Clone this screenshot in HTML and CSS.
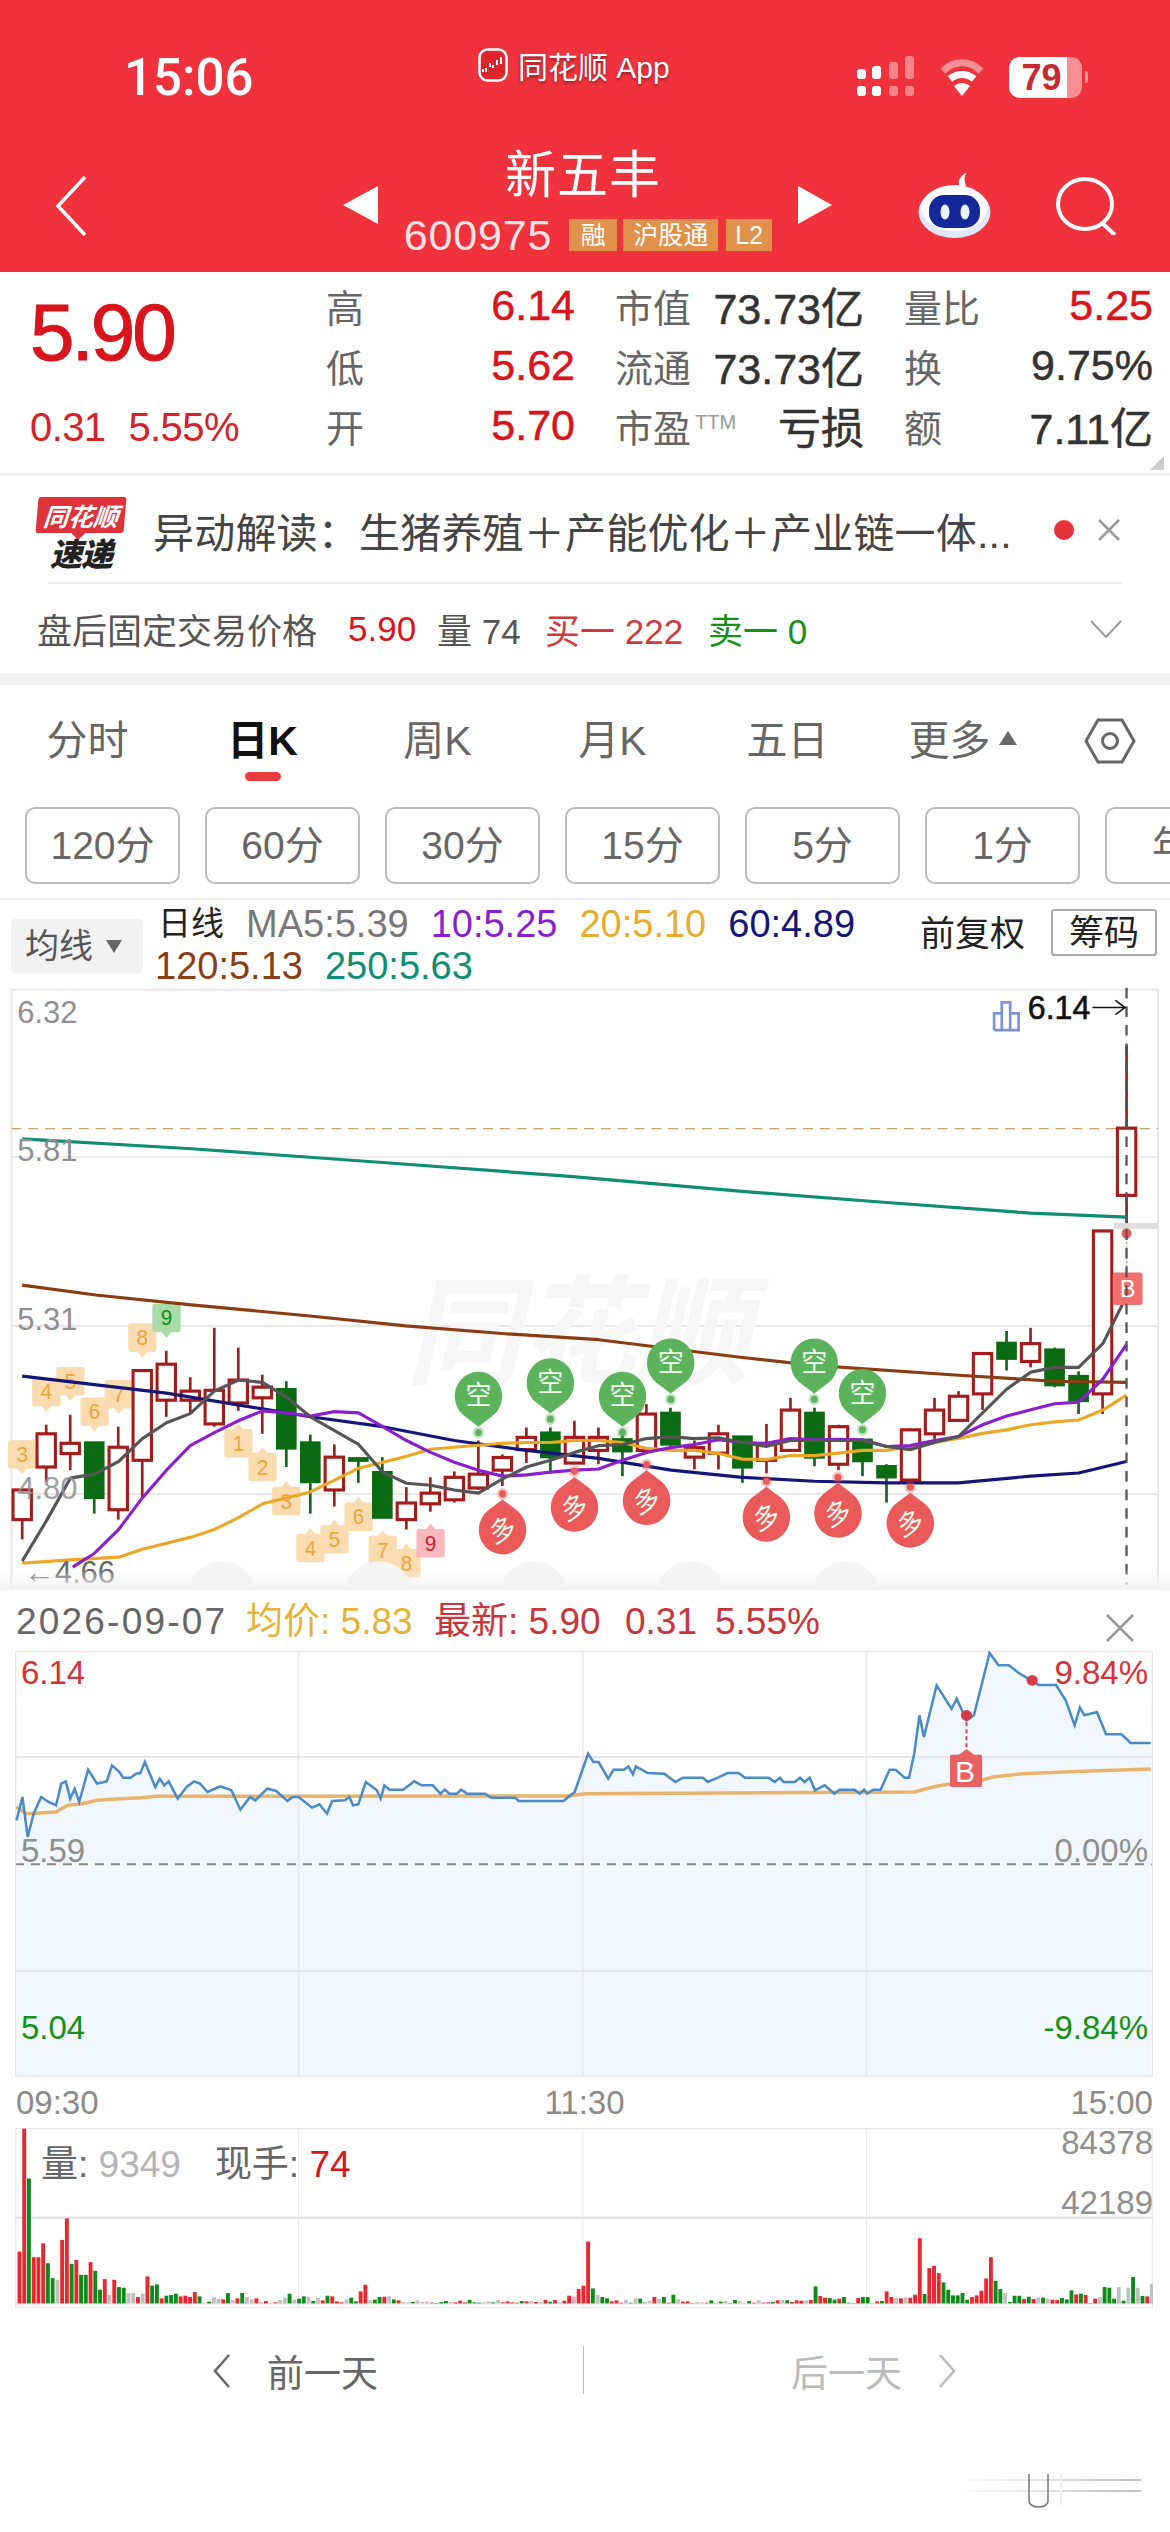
FILE: index.html

```html
<!DOCTYPE html>
<html lang="zh-CN">
<head>
  <meta charset="UTF-8">
  <title>新五丰 600975</title>
  <link rel="stylesheet" href="styles.css">
</head>
<body>
<div class="page">

  <header class="head">
    <div class="status">
      <div class="time">15:06</div>
      <div class="app">
        <svg class="app-icon" viewBox="0 0 30 34">
          <rect x="1.5" y="1.5" width="27" height="31" rx="8" fill="#e0242c" stroke="#fff" stroke-width="2.5"/>
          <path d="M5 21v3M8 20v4M12 15v4M15 17v3M19 12v5M23 9v7" stroke="#fff" stroke-width="2"/>
        </svg>
        <span>同花顺 App</span>
      </div>
      <div class="status-icons">
        <svg class="signal" viewBox="0 0 58 42">
          <g fill="#fff">
            <rect x="0" y="13" width="9" height="10" rx="3"/><rect x="0" y="30" width="9" height="10" rx="3"/>
            <rect x="15" y="10" width="9" height="13" rx="3"/><rect x="15" y="30" width="9" height="10" rx="3"/>
          </g>
          <g fill="#fff" opacity=".4">
            <rect x="32" y="6" width="9" height="17" rx="3"/><rect x="32" y="30" width="9" height="10" rx="3"/>
            <rect x="48" y="0" width="9" height="23" rx="3"/><rect x="48" y="30" width="9" height="10" rx="3"/>
          </g>
        </svg>
        <svg class="wifi" viewBox="0 0 46 38">
          <path d="M4 13C15 2 31 2 42 13" fill="none" stroke="#fff" stroke-width="7" opacity=".45"/>
          <path d="M11 21c7-6 17-6 24 0" fill="none" stroke="#fff" stroke-width="7"/>
          <path d="M15 28c5-4 11-4 16 0l-8 10z" fill="#fff"/>
        </svg>
        <div class="battery">79</div>
        <div class="battery-tip"></div>
      </div>
    </div>
    <div class="nav">
      <svg class="back" viewBox="0 0 32 60"><path d="M30 1 3 30l27 29" fill="none" stroke="#fff" stroke-width="3.5"/></svg>
      <div class="tri tri-left"></div>
      <div class="stock">
        <div class="stock-name">新五丰</div>
        <div class="stock-code">
          <span>600975</span>
          <b class="tag tag-1">融</b>
          <b class="tag tag-2">沪股通</b>
          <b class="tag tag-3">L2</b>
        </div>
      </div>
      <div class="tri tri-right"></div>
      <svg class="robot" viewBox="0 0 73 66">
        <path d="M42 15c-3-6 0-11 6-14-2 4-2 8 0 13z" fill="#fff"/>
        <ellipse cx="36.500" cy="40" rx="36" ry="26" fill="#dfe8f8"/>
        <ellipse cx="36.500" cy="36" rx="33" ry="23" fill="#fff"/>
        <rect x="11" y="23" width="51" height="33" rx="15" fill="#14289a"/>
        <ellipse cx="27" cy="40" rx="4.500" ry="7.500" fill="#e8f3ff"/>
        <ellipse cx="47" cy="40" rx="4.500" ry="7.500" fill="#e8f3ff"/>
      </svg>
      <svg class="search" viewBox="0 0 60 58">
        <ellipse cx="29" cy="27" rx="27" ry="25" fill="none" stroke="#fff" stroke-width="4"/>
        <path d="M46 46l13 12" stroke="#fff" stroke-width="4"/>
      </svg>
    </div>
  </header>

  <section class="quote">
    <div class="price-box">
      <div class="price">5.90</div>
      <div class="change"><span>0.31</span><span>5.55%</span></div>
    </div>
    <div class="stats">
      <div class="stat"><span>高</span><b class="up">6.14</b></div>
      <div class="stat"><span>市值</span><b>73.73亿</b></div>
      <div class="stat"><span>量比</span><b class="up">5.25</b></div>
      <div class="stat"><span>低</span><b class="up">5.62</b></div>
      <div class="stat"><span>流通</span><b>73.73亿</b></div>
      <div class="stat"><span>换</span><b>9.75%</b></div>
      <div class="stat"><span>开</span><b class="up">5.70</b></div>
      <div class="stat"><span>市盈<sup>TTM</sup></span><b>亏损</b></div>
      <div class="stat"><span>额</span><b>7.11亿</b></div>
    </div>
    <div class="corner"></div>
  </section>

  <section class="alert">
    <div class="logo">
      <div class="logo-top">同花顺</div>
      <div class="logo-bottom">速递</div>
    </div>
    <div class="alert-text">异动解读：生猪养殖＋产能优化＋产业链一体...</div>
    <div class="alert-dot"></div>
    <svg class="alert-close" viewBox="0 0 24 24"><path d="M2 2l20 20M22 2 2 22" stroke="#999" stroke-width="2.500"/></svg>
  </section>

  <section class="after">
    <span class="after-title">盘后固定交易价格</span>
    <span class="after-price">5.90</span>
    <span class="after-vol">量 74</span>
    <span class="after-buy">买一 222</span>
    <span class="after-sell">卖一 0</span>
    <svg class="after-more" viewBox="0 0 32 18"><path d="M1 1l15 16L31 1" fill="none" stroke="#999" stroke-width="2"/></svg>
  </section>

  <nav class="tabs">
    <div class="tab">分时</div>
    <div class="tab tab-on">日K</div>
    <div class="tab">周K</div>
    <div class="tab">月K</div>
    <div class="tab">五日</div>
    <div class="tab">更多<i class="more-arrow"></i></div>
    <svg class="hex" viewBox="0 0 52 46">
      <path d="M14 2h24l12 21-12 21H14L2 23z" fill="none" stroke="#666" stroke-width="3"/>
      <circle cx="26" cy="23" r="7.500" fill="none" stroke="#666" stroke-width="3"/>
    </svg>
  </nav>

  <div class="periods">
    <div class="period">120分</div>
    <div class="period">60分</div>
    <div class="period">30分</div>
    <div class="period">15分</div>
    <div class="period">5分</div>
    <div class="period">1分</div>
    <div class="period period-year">年</div>
  </div>

  <section class="legend">
    <div class="ma-select">均线<i></i></div>
    <div class="ma-values">
      <div class="ma-row">
        <span class="ma-name">日线</span>
        <span class="ma5">MA5:5.39</span>
        <span class="ma10">10:5.25</span>
        <span class="ma20">20:5.10</span>
        <span class="ma60">60:4.89</span>
      </div>
      <div class="ma-row">
        <span class="ma120">120:5.13</span>
        <span class="ma250">250:5.63</span>
      </div>
    </div>
    <div class="adjust">前复权</div>
    <div class="chips">筹码</div>
  </section>

  <div class="kchart"><svg id="kline" viewBox="0 13 3057 1530" preserveAspectRatio="none"></svg></div>

  <section class="day">
    <div class="day-head">
      <span class="day-date">2026-09-07</span>
      <span class="day-avg">均价: 5.83</span>
      <span class="day-last">最新: 5.90</span>
      <span class="day-chg">0.31</span>
      <span class="day-pct">5.55%</span>
      <svg class="day-close" viewBox="0 0 28 28"><path d="M1 1l26 26M27 1 1 27" stroke="#999" stroke-width="2.500"/></svg>
    </div>
    <div class="day-chart">
      <svg id="minute" viewBox="20 212 1525 1278" preserveAspectRatio="none"></svg>
      <span class="axis up tl">6.14</span>
      <span class="axis up tr">9.84%</span>
      <span class="axis gray ml">5.59</span>
      <span class="axis gray mr">0.00%</span>
      <span class="axis down bl">5.04</span>
      <span class="axis down br">-9.84%</span>
      <span class="flag-b">B</span>
    </div>
    <div class="day-times"><span>09:30</span><span>11:30</span><span>15:00</span></div>
    <div class="vol-chart">
      <svg id="volume" viewBox="20 203 1525 542" preserveAspectRatio="none"></svg>
      <div class="vol-info">
        <span>量: <em class="muted">9349</em></span>
        <span>现手: <em class="up">74</em></span>
      </div>
      <span class="vol-max">84378</span>
      <span class="vol-mid">42189</span>
    </div>
    <div class="day-nav">
      <div class="day-btn">
        <svg viewBox="0 0 18 34"><path d="M16 1 2 17l14 16" fill="none" stroke="#666" stroke-width="2.500"/></svg>
        <span>前一天</span>
      </div>
      <div class="day-btn day-btn-off">
        <span>后一天</span>
        <svg viewBox="0 0 18 34"><path d="M2 1l14 16L2 33" fill="none" stroke="#bbb" stroke-width="2.500"/></svg>
      </div>
    </div>
  </section>

  <svg class="mark" viewBox="0 0 186 36">
    <defs>
      <linearGradient id="markFade"><stop offset="0" stop-color="#000" stop-opacity="0"/><stop offset="1" stop-color="#000" stop-opacity=".25"/></linearGradient>
    </defs>
    <rect x="0" y="6" width="186" height="2" fill="url(#markFade)"/>
    <rect x="0" y="17" width="186" height="2" fill="url(#markFade)"/>
    <path d="M74 1v27c0 8 19 8 19 0V1" fill="none" stroke="#777" stroke-width="1.500"/>
    <path d="M106 0v32" stroke="#eee" stroke-width="2"/>
  </svg>
</div>
<script src="chart.js"></script>
</body>
</html>
```

FILE: styles.css

```css
* { box-sizing: border-box; }
html, body { margin: 0; padding: 0; background: #fff; }
body { font-family: "Liberation Sans", "Noto Sans CJK SC", sans-serif; color: #333; }
svg { display: block; }
.page { width: 1170px; height: 2532px; overflow: hidden; position: relative; }
.up { color: #d8141c; }
.down { color: #169016; }
.gray { color: #8f8f8f; }

/* red header */
.head { background: #f0323c; height: 272px; color: #fff; }
.status { height: 154px; display: grid; grid-template-columns: 478px 379px auto; align-items: center; }
.time { padding-left: 124px; font: 500 51px Roboto, sans-serif; }
.app { display: flex; align-items: center; gap: 10px; margin-bottom: 24px; font-size: 30px; text-shadow: 0 2px 3px rgba(0, 0, 0, .4); }
.app-icon { width: 30px; height: 34px; }
.status-icons { display: flex; align-items: center; }
.signal { width: 58px; height: 42px; }
.wifi { width: 46px; height: 38px; margin-left: 24px; }
.battery { width: 73px; height: 41px; margin-left: 24px; border-radius: 11px; background: linear-gradient(90deg, #fff 79%, rgba(255, 255, 255, .45) 79%); color: #c82a34; font: 700 36px/41px "Liberation Sans", sans-serif; text-align: center; padding-right: 8px; }
.battery-tip { width: 3px; height: 12px; margin-left: 3px; background: rgba(255, 255, 255, .5); border-radius: 0 3px 3px 0; }

.nav { height: 118px; display: flex; align-items: flex-start; }
.back { width: 32px; height: 60px; margin: 22px 0 0 55px; }
.tri { width: 0; height: 0; margin-top: 32px; border-top: 19px solid transparent; border-bottom: 19px solid transparent; }
.tri-left { margin-left: 256px; border-right: 35px solid #fff; }
.tri-right { border-left: 34px solid #fff; }
.stock { width: 420px; text-align: center; }
.stock-name { font-size: 51px; line-height: 56px; margin: -6px 0 0 -10px; letter-spacing: 1px; }
.stock-code { display: flex; justify-content: center; align-items: center; gap: 6px; margin-top: 15px; height: 32px; font-size: 43px; color: #fbe3e3; }
.stock-code span { margin-right: 11px; letter-spacing: .8px; }
.tag { height: 32px; line-height: 32px; font-size: 25px; font-weight: 400; background: #e0914a; color: #fff; text-align: center; }
.tag-1 { width: 48px; }
.tag-2 { width: 95px; }
.tag-3 { width: 46px; margin-left: 2px; }
.robot { width: 73px; height: 66px; margin: 18px 0 0 86px; }
.search { width: 60px; height: 58px; margin: 23px 0 0 65px; }

/* quote table */
.quote { height: 204px; display: flex; position: relative; border-bottom: 3px solid #eee; }
.price-box { width: 326px; padding-left: 30px; }
.price { font-size: 80px; line-height: 80px; margin-top: 21px; color: #d8141c; letter-spacing: -3px; -webkit-text-stroke: 1px #d8141c; }
.change { display: flex; gap: 23px; margin-top: 32px; font-size: 40px; line-height: 44px; color: #d2232b; letter-spacing: -.6px; }
.stats { width: 827px; padding-top: 3px; display: grid; grid-template-columns: repeat(3, 249px); column-gap: 40px; grid-auto-rows: 60px; align-items: center; }
.stat { display: flex; justify-content: space-between; align-items: center; }
.stat span { font-size: 38px; color: #666; white-space: nowrap; }
.stat b { font-size: 43px; font-weight: 400; color: #333; -webkit-text-stroke: .5px currentColor; white-space: nowrap; }
.stat b.up { color: #d8141c; }
.stat sup { font-size: 20px; color: #999; margin-left: 4px; vertical-align: 13px; line-height: 0; }
.corner { position: absolute; right: 6px; bottom: 3px; width: 0; height: 0; border-left: 14px solid transparent; border-bottom: 14px solid #ccc; }

/* alert */
.alert { height: 108px; margin: 0 48px 0 37px; display: flex; align-items: center; position: relative; }
.alert::after { content: ""; position: absolute; left: 11px; right: 0; bottom: 0; height: 2px; background: #eee; }
.logo { width: 88px; margin-top: 6px; }
.logo-top { height: 36px; background: #e0323a; color: #fff; font: italic 700 25px/36px "Noto Sans CJK SC", sans-serif; text-align: center; border-radius: 3px; transform: skewX(-5deg); position: relative; }
.logo-top::after { content: ""; position: absolute; left: 36px; bottom: -7px; border-left: 7px solid transparent; border-right: 7px solid transparent; border-top: 7px solid #e0323a; }
.logo-bottom { font: italic 900 32px/34px "Noto Sans CJK SC", sans-serif; color: #222; text-align: center; margin-top: 2px; letter-spacing: -1px; }
.alert-text { width: 929px; padding-left: 28px; font-size: 41px; color: #444; white-space: nowrap; letter-spacing: .2px; }
.alert-dot { width: 20px; height: 20px; border-radius: 50%; background: #e5323a; }
.alert-close { width: 24px; height: 24px; margin-left: 23px; }

.after { height: 89px; padding-left: 37px; display: flex; align-items: center; font-size: 35px; white-space: nowrap; color: #555; }
.after-title { width: 311px; }
.after-price { width: 89px; color: #d8141c; }
.after-vol { width: 108px; }
.after-buy { width: 163px; color: #d0393e; }
.after-sell { width: 382px; color: #169016; }
.after-more { width: 32px; height: 18px; }

/* tabs */
.tabs { height: 134px; border-top: 12px solid #f3f3f3; display: flex; align-items: flex-start; padding-top: 31px; }
.tab { width: 175px; text-align: center; font-size: 41px; line-height: 50px; color: #666; white-space: nowrap; }
.tab-on { color: #111; font-weight: 700; position: relative; }
.tab-on::after { content: ""; position: absolute; left: 70px; top: 56px; width: 36px; height: 9px; border-radius: 5px; background: #ee3b40; }
.more-arrow { display: inline-block; margin: 0 0 10px 8px; border-left: 9px solid transparent; border-right: 9px solid transparent; border-bottom: 14px solid #666; }
.hex { width: 52px; height: 46px; margin: 2px 0 0 34px; }

.periods { height: 93px; padding: 0 0 14px 25px; display: flex; gap: 25px; overflow: hidden; border-bottom: 2px solid #eee; }
.period { flex: 0 0 155px; height: 77px; border: 2px solid #bbb; border-radius: 10px; font-size: 39px; line-height: 73px; text-align: center; color: #666; }
.period-year { padding-left: 45px; text-align: left; }

/* moving average legend */
.legend { height: 85px; display: flex; align-items: flex-start; position: relative; font-size: 38px; white-space: nowrap; }
.ma-select { width: 132px; height: 54px; margin: 19px 0 0 11px; background: #f2f2f2; border-radius: 4px; font-size: 34px; line-height: 54px; color: #555; padding-left: 14px; display: flex; align-items: center; gap: 13px; }
.ma-select i { border-left: 8px solid transparent; border-right: 8px solid transparent; border-top: 13px solid #666; }
.ma-values { width: 755px; margin-left: 12px; padding-top: 3px; }
.ma-row { height: 42px; display: flex; gap: 22px; line-height: 42px; }
.ma-name { color: #222; font-size: 33px; margin-left: 3px; }
.ma5 { color: #777; }
.ma10 { color: #8a1fd0; }
.ma20 { color: #e8ac2e; }
.ma60 { color: #14147a; }
.ma120 { color: #8a3c12; }
.ma250 { color: #0f8e74; }
.adjust { margin: 13px 0 0 10px; color: #222; font-size: 35px; line-height: 42px; }
.chips { width: 106px; height: 47px; margin: 9px 0 0 26px; border: 2px solid #aaa; border-radius: 3px; color: #222; font-size: 35px; line-height: 43px; text-align: center; }

/* day k chart */
.kchart { height: 605px; }
#kline { width: 1170px; height: 605px; }
#kline text { font-family: "Liberation Sans", "Noto Sans CJK SC", sans-serif; }
.k-axis { font-size: 81px; fill: #8f8f8f; }
.k-wm { font-size: 300px; font-weight: 700; font-style: italic; fill: #f6f6f6; }
.k-num { font-size: 54px; text-anchor: middle; }
.k-pin { font-size: 68px; text-anchor: middle; fill: #eef8ee; }
.k-high { font-size: 84px; fill: #111; stroke: #111; stroke-width: 1.5px; }
.k-b { font-size: 62px; text-anchor: middle; fill: #fff; }

/* minute chart */
.day { height: 844px; }
.day-head { height: 61px; position: relative; display: flex; align-items: center; font-size: 37px; white-space: nowrap; }
.day-head span { position: absolute; top: 10px; line-height: 44px; }
.day-date { left: 16px; color: #666; letter-spacing: 2.200px; }
.day-avg { left: 246px; color: #e3b436; }
.day-last { left: 434px; color: #c8353c; }
.day-chg { left: 625px; color: #c8353c; }
.day-pct { left: 715px; color: #c8353c; }
.day-close { position: absolute; left: 1106px; top: 24px; width: 28px; height: 28px; }

.day-chart { width: 1138px; height: 426px; margin-left: 15px; position: relative; }
.day-chart svg, .vol-chart svg { width: 100%; height: 100%; }
.thin { vector-effect: non-scaling-stroke; }
.axis { position: absolute; font-size: 33px; line-height: 38px; }
.tl { left: 6px; top: 3px; }
.tr { right: 5px; top: 3px; }
.ml { left: 6px; top: 181px; }
.mr { right: 5px; top: 181px; }
.bl { left: 6px; top: 358px; }
.br { right: 5px; top: 358px; }
.axis.up { color: #d2323a; }
.flag-b { position: absolute; left: 934px; top: 105px; width: 32px; height: 31px; color: #fff; font-size: 30px; line-height: 31px; text-align: center; }

.day-times { height: 51px; margin: 0 17px 0 16px; display: flex; justify-content: space-between; align-items: center; font-size: 33px; color: #8a8a8a; }
.vol-chart { width: 1138px; height: 180px; margin-left: 15px; position: relative; }
.vol-info { position: absolute; left: 26px; top: 16px; display: flex; gap: 34px; font-size: 37px; line-height: 42px; color: #666; }
.vol-info em { font-style: normal; }
.muted { color: #b5b5b5; }
.vol-info .up { color: #d8141c; }
.vol-max, .vol-mid { position: absolute; right: 0; font-size: 33px; line-height: 38px; color: #8f8f8f; }
.vol-max { top: -4px; }
.vol-mid { top: 56px; }

.day-nav { height: 126px; display: flex; align-items: center; position: relative; }
.day-nav::after { content: ""; position: absolute; left: 583px; top: 38px; width: 1px; height: 48px; background: #bbb; }
.day-btn { width: 583px; display: flex; align-items: center; gap: 36px; padding-left: 213px; font-size: 37px; color: #666; }
.day-btn svg { width: 18px; height: 34px; }
.day-btn-off { padding-left: 208px; color: #bbb; }

.mark { width: 186px; height: 36px; position: absolute; left: 955px; top: 2473px; }
```

FILE: chart.js

```js
const NS = "http://www.w3.org/2000/svg";

function add(parent, tag, attrs, text) {
  const node = document.createElementNS(NS, tag);
  for (const key in attrs) node.setAttribute(key, attrs[key]);
  if (text) node.textContent = text;
  parent.appendChild(node);
  return node;
}

function points(list) {
  return list.map(p => p[0] + "," + p[1]).join(" ");
}

// k line chart. coordinates are read off a zoomed crop, the second half of the chart has an offset
const R = 1489.4;
const right = list => list.map(p => [p[0] + R, p[1]]);
const RED = "#a51a1a";
const GREEN = "#0b6b12";

// high, top, bottom, low, is green
const candles = [
  [1290, 1290, 1365, 1415], [1125, 1148, 1232, 1270], [1100, 1172, 1198, 1240], [1170, 1170, 1310, 1350, 1],
  [1130, 1182, 1340, 1365], [988, 988, 1215, 1308], [938, 972, 1063, 1105], [1005, 1040, 1063, 1095],
  [880, 1038, 1123, 1130], [930, 1012, 1070, 1090], [998, 1030, 1057, 1148], [1015, 1035, 1185, 1232, 1],
  [1150, 1170, 1270, 1350, 1], [1175, 1207, 1290, 1332], [1210, 1210, 1216, 1272, 1], [1207, 1245, 1360, 1360, 1],
  [1283, 1323, 1365, 1390], [1258, 1298, 1325, 1345], [1243, 1258, 1315, 1322], [1165, 1250, 1285, 1290],
  [1200, 1208, 1240, 1280], [1132, 1157, 1188, 1222], [1132, 1145, 1207, 1243, 1], [1115, 1157, 1222, 1225],
  [1132, 1157, 1190, 1225], [1135, 1162, 1192, 1255, 1], [1073, 1098, 1190, 1195], [1082, 1095, 1175, 1180, 1],
  [1165, 1183, 1207, 1238], [1125, 1148, 1197, 1238], [1155, 1155, 1233, 1272, 1], [1123, 1175, 1215, 1248],
  [1057, 1088, 1190, 1190], [1082, 1095, 1208, 1230, 1], [1125, 1130, 1225, 1240], [1160, 1163, 1217, 1255, 1],
  [1225, 1230, 1258, 1322, 1], [1135, 1138, 1265, 1265], [1057, 1088, 1148, 1165], [1040, 1053, 1114, 1114],
  [945, 945, 1047, 1088], [888, 918, 958, 988, 1], [880, 920, 965, 980], [930, 935, 1025, 1030, 1],
  [990, 1002, 1065, 1098, 1], [635, 635, 1047, 1098], [165, 375, 545, 630]
];

const maLines = [
  { color: "#8a3c12", pts: [[58, 772], [250, 797], [500, 822], [810, 850], [1060, 875], [1320, 895]].concat(right([[75, 910], [450, 955], [638, 975], [1015, 1000], [1266, 1015], [1454, 1018]])) },
  { color: "#0f8e74", pts: [[58, 402], [500, 427], [1000, 462], [1489, 497]].concat(right([[450, 535], [827, 563], [1204, 590], [1454, 600]])) },
  { color: "#14147a", pts: [[58, 1002], [435, 1045], [686, 1085], [811, 1105], [1000, 1130], [1187, 1165], [1376, 1190], [1564, 1210]].concat(right([[264, 1240], [450, 1258], [638, 1268], [827, 1272], [1015, 1272], [1204, 1255], [1329, 1247], [1454, 1218]])) },
  { color: "#eba827", pts: [[58, 1475], [184, 1467], [310, 1460], [372, 1440], [497, 1410], [560, 1390], [623, 1360], [686, 1325], [811, 1295], [874, 1265], [937, 1235], [1000, 1220], [1062, 1205], [1125, 1187], [1187, 1182], [1250, 1177], [1313, 1172], [1376, 1170], [1438, 1170], [1501, 1165], [1564, 1165]].concat(right([[137, 1170], [200, 1185], [263, 1190], [325, 1190], [388, 1198], [450, 1212], [513, 1213], [576, 1203], [638, 1203], [701, 1197], [764, 1190], [827, 1190], [889, 1180], [952, 1170], [1015, 1160], [1078, 1147], [1141, 1138], [1204, 1125], [1266, 1118], [1329, 1113], [1392, 1088], [1454, 1050]])) },
  { color: "#8a1fd0", pts: [[190, 1485], [247, 1450], [310, 1390], [372, 1310], [435, 1240], [497, 1178], [560, 1145], [623, 1115], [686, 1090], [748, 1095], [811, 1103], [874, 1092], [937, 1095], [1000, 1130], [1062, 1165], [1125, 1195], [1187, 1220], [1250, 1240], [1313, 1255], [1376, 1252], [1438, 1245], [1501, 1240], [1564, 1237]].concat(right([[137, 1215], [200, 1195], [263, 1183], [325, 1175], [388, 1163], [450, 1170], [513, 1172], [576, 1160], [638, 1163], [701, 1162], [764, 1163], [827, 1180], [889, 1178], [952, 1165], [1015, 1155], [1078, 1125], [1141, 1103], [1204, 1087], [1266, 1072], [1329, 1068], [1392, 1010], [1454, 922]])) },
  { color: "#555555", pts: [[58, 1470], [120, 1370], [184, 1260], [247, 1250], [310, 1218], [372, 1160], [435, 1120], [497, 1097], [560, 1040], [623, 1012], [686, 1018], [748, 1055], [811, 1105], [874, 1140], [937, 1175], [1000, 1245], [1062, 1273], [1125, 1278], [1187, 1290], [1250, 1298], [1313, 1262], [1376, 1232], [1438, 1215], [1501, 1195], [1564, 1178]].concat(right([[137, 1175], [200, 1160], [263, 1155], [325, 1160], [388, 1158], [450, 1170], [513, 1180], [576, 1165], [638, 1165], [701, 1165], [764, 1165], [827, 1180], [889, 1188], [952, 1170], [1015, 1155], [1078, 1095], [1141, 1035], [1204, 992], [1266, 980], [1329, 980], [1392, 920], [1454, 800]])) }
];

// x, y, digit, tip direction
const nineTurn = [
  [58, 1200, 3, 1], [121, 1042, 4, 1], [184, 1015, 5, 1], [247, 1092, 6, 1], [310, 1048, 7, 1], [372, 905, 8, 1], [435, 855, 9, 1],
  [623, 1172, 1, -1], [686, 1232, 2, -1], [748, 1318, 3, -1], [811, 1437, 4, -1], [874, 1415, 5, -1], [937, 1358, 6, -1],
  [1000, 1442, 7, -1], [1062, 1475, 8, -1], [1125, 1425, 9, -1]
];

const shortPins = [[1250, 1052], [1438, 1018], [137 + R, 1052], [263 + R, 968], [638 + R, 968], [764 + R, 1045]];
const longPins = [[1313, 1392], [1501, 1335], [200 + R, 1318], [513 + R, 1360], [700 + R, 1350], [889 + R, 1375]];

function drawKline() {
  const svg = document.getElementById("kline");

  const defs = add(svg, "defs", {});
  const fade = add(defs, "linearGradient", { id: "kFade", x1: 0, y1: 0, x2: 0, y2: 1 });
  add(fade, "stop", { offset: 0, "stop-color": "#f3f3f3", "stop-opacity": 0 });
  add(fade, "stop", { offset: 1, "stop-color": "#f3f3f3", "stop-opacity": 1 });

  add(svg, "rect", { x: 30, y: 25, width: 2996, height: 1510, fill: "#fff", stroke: "#e8e8e8", "stroke-width": 5 });
  [448, 875, 1300].forEach(y => add(svg, "line", { x1: 30, x2: 3026, y1: y, y2: y, stroke: "#e6e6e6", "stroke-width": 4 }));
  add(svg, "text", { x: 1060, y: 1000, class: "k-wm" }, "同花顺");
  add(svg, "line", { x1: 30, x2: 3026, y1: 376, y2: 376, stroke: "#c9a06a", "stroke-width": 3, "stroke-dasharray": "26 18" });

  nineTurn.forEach(n => {
    const color = n[2] === 9 ? (n[3] > 0 ? "#a8dba8" : "#fbb9bd") : "#fbdcb0";
    const ink = n[2] === 9 ? (n[3] > 0 ? "#168a16" : "#c82028") : "#eca63c";
    add(svg, "rect", { x: n[0] - 37, y: n[1] - 36, width: 74, height: 72, rx: 6, fill: color });
    const tip = n[1] + n[3] * 50;
    add(svg, "polygon", { points: points([[n[0] - 14, n[1] + n[3] * 34], [n[0] + 14, n[1] + n[3] * 34], [n[0], tip]]), fill: color });
    add(svg, "text", { x: n[0], y: n[1] + 19, class: "k-num", fill: ink }, String(n[2]));
  });

  candles.forEach((c, i) => {
    const x = 58 + i * 62.73;
    const color = c[4] ? GREEN : RED;
    add(svg, "line", { x1: x, x2: x, y1: c[0], y2: c[3], stroke: color, "stroke-width": 7 });
    add(svg, "rect", { x: x - 24, y: c[1], width: 48, height: c[2] - c[1], fill: c[4] ? GREEN : "#fff", stroke: color, "stroke-width": c[4] ? 6 : 8 });
  });

  maLines.forEach(line => add(svg, "polyline", { points: points(line.pts), fill: "none", stroke: line.color, "stroke-width": 8, "stroke-linejoin": "round" }));

  shortPins.forEach(p => {
    const x = p[0], y = p[1];
    add(svg, "path", { d: `M${x - 38} ${y + 50}A62 62 0 1 1 ${x + 38} ${y + 50}L${x} ${y + 78}Z`, fill: "#5cb35c" });
    add(svg, "circle", { cx: x, cy: y + 93, r: 15, fill: "#5cb35c", opacity: 0.35 });
    add(svg, "circle", { cx: x, cy: y + 93, r: 9, fill: "#5cb35c" });
    add(svg, "text", { x: x, y: y + 24, class: "k-pin" }, "空");
  });
  longPins.forEach(p => {
    const x = p[0], y = p[1];
    add(svg, "path", { d: `M${x - 38} ${y - 50}A62 62 0 1 0 ${x + 38} ${y - 50}L${x} ${y - 78}Z`, fill: "#ea5a5a" });
    add(svg, "circle", { cx: x, cy: y - 92, r: 15, fill: "#ea5a5a", opacity: 0.35 });
    add(svg, "circle", { cx: x, cy: y - 92, r: 9, fill: "#ea5a5a" });
    add(svg, "text", { x: x, y: y + 24, class: "k-pin", transform: `rotate(-20 ${x} ${y})` }, "多");
  });

  // last candle: B flag and crosshair
  const lastX = 1454 + R;
  add(svg, "rect", { x: 1420 + R, y: 615, width: 117, height: 15, fill: "#dedede" });
  add(svg, "line", { x1: lastX, x2: lastX, y1: 650, y2: 740, stroke: "#f08a8a", "stroke-width": 4, "stroke-dasharray": "6 6" });
  add(svg, "rect", { x: 1418 + R, y: 740, width: 78, height: 82, rx: 6, fill: "#f07070" });
  add(svg, "text", { x: 1457 + R, y: 803, class: "k-b" }, "B");
  add(svg, "circle", { cx: lastX, cy: 641, r: 13, fill: "#e85a5a" });
  add(svg, "line", { x1: lastX, x2: lastX, y1: 20, y2: 1530, stroke: "#555", "stroke-width": 6, "stroke-dasharray": "27 20" });

  add(svg, "text", { x: 45, y: 108, class: "k-axis" }, "6.32");
  add(svg, "text", { x: 45, y: 458, class: "k-axis" }, "5.81");
  add(svg, "text", { x: 45, y: 885, class: "k-axis" }, "5.31");
  add(svg, "text", { x: 45, y: 1312, class: "k-axis", opacity: 0.85 }, "4.80");
  add(svg, "text", { x: 62, y: 1525, class: "k-axis", style: "fill:#666" }, "←4.66");

  // high price note
  add(svg, "path", { d: `M${1108 + R} 127V85h20v42M${1128 + R} 127V57h22v70M${1150 + R} 127V85h22v42H${1108 + R}`, fill: "none", stroke: "#7b93d6", "stroke-width": 7 });
  add(svg, "text", { x: 1196 + R, y: 100, class: "k-high" }, "6.14");
  add(svg, "path", { d: `M${1365 + R} 70H${1448 + R}M${1425 + R} 52L${1450 + R} 70L${1425 + R} 88`, fill: "none", stroke: "#111", "stroke-width": 4 });

  // floating toolbar behind the fade
  [580, 990, 1395, 315 + R, 720 + R].forEach(x => add(svg, "circle", { cx: x, cy: 1560, r: 90, fill: "#f5f5f5" }));
  add(svg, "rect", { x: 0, y: 1490, width: 3057, height: 55, fill: "url(#kFade)" });
}

// minute chart, coordinates in the zoom units of the svg viewBox
const price = [[22,720],[30,650],[37,770],[45,700],[55,650],[65,665],[75,675],[82,610],[88,603],[94,655],[100,625],[106,665],[118,568],[130,610],[143,603],[150,555],[160,575],[165,592],[175,592],[182,580],[188,578],[194,545],[208,620],[214,595],[220,615],[226,603],[238,655],[250,620],[260,603],[268,610],[278,635],[295,618],[310,630],[322,688],[335,650],[342,660],[358,625],[370,632],[385,662],[392,650],[400,650],[418,682],[428,672],[438,700],[445,662],[462,660],[468,650],[473,675],[480,672],[490,605],[505,630],[510,655],[515,615],[522,628],[540,628],[555,603],[565,615],[580,615],[590,640],[596,628],[602,640],[612,640],[618,628],[626,640],[650,640],[658,652],[690,652],[695,662],[755,662],[770,635],[788,520],[795,545],[802,545],[815,595],[822,568],[836,568],[842,558],[848,582],[852,558],[868,578],[890,580],[905,605],[915,592],[942,592],[948,605],[962,592],[975,578],[990,578],[998,592],[1030,592],[1038,605],[1045,592],[1050,605],[1065,605],[1072,592],[1078,605],[1085,592],[1092,630],[1105,615],[1118,640],[1125,628],[1145,628],[1152,640],[1158,628],[1162,640],[1170,628],[1180,628],[1192,568],[1200,568],[1212,592],[1218,592],[1225,520],[1232,405],[1238,470],[1255,315],[1275,385],[1282,355],[1295,420],[1305,405],[1318,290],[1326,218],[1338,255],[1352,255],[1365,278],[1382,300],[1392,314],[1415,314],[1428,360],[1440,435],[1447,382],[1453,405],[1470,395],[1482,462],[1503,462],[1515,488],[1542,488]];
const avg = [[22,680],[35,700],[75,695],[90,675],[110,670],[130,660],[160,655],[190,652],[210,648],[760,647],[785,640],[1225,635],[1250,620],[1270,612],[1300,610],[1330,590],[1370,580],[1450,573],[1542,566]];

function drawMinute() {
  const svg = document.getElementById("minute");
  add(svg, "polygon", { points: points(price) + " 1542,1490 22,1490", fill: "#f2f7fd" });
  [400, 781, 1161].forEach(x => add(svg, "line", { x1: x, x2: x, y1: 212, y2: 1490, stroke: "#e6e9ee", class: "thin", "stroke-width": 1.5 }));
  [530, 1172].forEach(y => add(svg, "line", { x1: 20, x2: 1545, y1: y, y2: y, stroke: "#e4e6ea", class: "thin", "stroke-width": 2 }));
  add(svg, "line", { x1: 20, x2: 1545, y1: 852, y2: 852, stroke: "#888", class: "thin", "stroke-width": 2, "stroke-dasharray": "9 7" });
  add(svg, "rect", { x: 20, y: 212, width: 1525, height: 1278, fill: "none", stroke: "#e2e4e8", class: "thin", "stroke-width": 2.5 });
  add(svg, "polyline", { points: points(avg), fill: "none", stroke: "#e9b36b", class: "thin", "stroke-width": 3.5 });
  add(svg, "polyline", { points: points(price), fill: "none", stroke: "#4a8ac6", class: "thin", "stroke-width": 2.5 });
  add(svg, "line", { x1: 1295, x2: 1295, y1: 405, y2: 525, stroke: "#e2404a", class: "thin", "stroke-width": 2, "stroke-dasharray": "4 3" });
  add(svg, "polygon", { points: "1284,525 1306,525 1295,506", fill: "#e86060" });
  add(svg, "rect", { x: 1273, y: 523, width: 43, height: 97, rx: 4, fill: "#e86060" });
  add(svg, "ellipse", { cx: 1295, cy: 405, rx: 7.5, ry: 16, fill: "#d83a46" });
  add(svg, "ellipse", { cx: 1383, cy: 300, rx: 7.5, ry: 16, fill: "#d83a46" });
}

// volume: the tall bars are listed, the rest are small
const bars = {
  26: [575, "r"], 32: [205, "r"], 38: [355, "g"], 44: [592, "r"], 50: [592, "r"], 56: [550, "r"], 63: [610, "g"], 70: [655, "g"], 76: [660, "n"], 82: [540, "r"], 88: [475, "r"], 95: [612, "g"],
  101: [600, "r"], 107: [645, "g"], 114: [645, "g"], 120: [607, "r"], 126: [633, "g"], 132: [690, "g"], 139: [658, "r"], 145: [705, "n"], 151: [660, "r"], 158: [682, "g"], 164: [684, "g"], 170: [700, "n"],
  177: [700, "n"], 183: [712, "r"], 190: [702, "n"], 196: [650, "r"], 202: [678, "g"], 208: [674, "g"], 214: [716, "r"], 221: [708, "g"], 227: [706, "g"], 233: [702, "g"], 240: [710, "r"], 246: [708, "r"],
  252: [712, "r"], 259: [697, "r"], 304: [700, "g"], 322: [700, "g"], 385: [702, "g"], 410: [710, "g"], 436: [708, "g"], 448: [710, "r"], 486: [695, "r"], 492: [675, "r"], 500: [720, "g"],
  765: [708, "r"], 778: [688, "r"], 784: [678, "r"], 790: [545, "r"], 796: [686, "g"], 802: [706, "n"], 808: [712, "g"], 904: [705, "g"], 1094: [680, "g"], 1162: [712, "g"], 1188: [695, "r"], 1195: [712, "r"],
  1226: [705, "r"], 1233: [535, "r"], 1239: [703, "g"], 1245: [625, "r"], 1251: [618, "r"], 1258: [640, "r"], 1264: [668, "g"], 1270: [690, "g"], 1277: [707, "g"], 1283: [707, "g"], 1289: [700, "g"], 1296: [720, "g"],
  1302: [712, "r"], 1308: [707, "r"], 1314: [693, "r"], 1321: [656, "r"], 1327: [592, "r"], 1334: [663, "g"], 1340: [688, "g"], 1346: [700, "n"], 1358: [708, "g"], 1364: [708, "g"], 1377: [711, "g"], 1396: [714, "g"],
  1422: [715, "g"], 1435: [692, "g"], 1441: [704, "r"], 1448: [702, "g"], 1454: [706, "r"], 1479: [682, "g"], 1485: [684, "g"], 1498: [682, "n"], 1510: [684, "n"], 1516: [652, "g"], 1522: [684, "n"], 1541: [672, "n"]
};
const barColors = { r: "#e8282e", g: "#0f8a1a", n: "#c0c0c0" };

function drawVolume() {
  const svg = document.getElementById("volume");
  add(svg, "rect", { x: 20, y: 203, width: 1525, height: 542, fill: "none", stroke: "#e8e8e8", class: "thin", "stroke-width": 2.5 });
  add(svg, "line", { x1: 20, x2: 1545, y1: 473, y2: 473, stroke: "#e6e6e6", class: "thin", "stroke-width": 2.5 });
  [400, 781, 1161].forEach(x => add(svg, "line", { x1: x, x2: x, y1: 203, y2: 745, stroke: "#e8e8e8", class: "thin", "stroke-width": 1 }));

  let seed = 7;
  const taken = Object.keys(bars).map(Number);
  for (let x = 26; x < 1545; x += 6.35) {
    const near = taken.find(t => Math.abs(t - x) < 3.2);
    seed = (seed * 137 + 59) % 1024;
    let top, kind;
    if (near !== undefined) {
      top = bars[near][0];
      kind = bars[near][1];
    } else {
      const quiet = x > 540 && x < 760 || x > 910 && x < 1090;
      top = 730 - seed % (quiet ? 10 : 22);
      kind = "rgn"[seed % 3];
    }
    add(svg, "rect", { x: x - 2.6, y: top, width: 5.2, height: 732 - top, fill: barColors[kind] });
  }
  add(svg, "line", { x1: 20, x2: 1545, y1: 733, y2: 733, stroke: "#ddd", class: "thin", "stroke-width": 1 });
}

drawKline();
drawMinute();
drawVolume();
```
